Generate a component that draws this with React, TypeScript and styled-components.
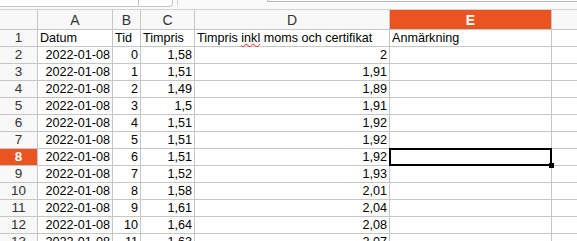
import React from "react";
import styled, { createGlobalStyle } from "styled-components";

const Global = createGlobalStyle`
  html, body { margin: 0; padding: 0; background: #ffffff; }
  body { width: 577px; height: 241px; overflow: hidden; font-family: "Liberation Sans", Arial, sans-serif; }
`;

const Page = styled.div`
  width: 577px;
  height: 241px;
  overflow: hidden;
  display: flex;
  flex-direction: column;
  background: #ffffff;
`;

const FormulaStrip = styled.div`
  height: 9px;
  flex: none;
  display: flex;
  align-items: flex-start;
  background: #fafafa;
`;

const NameBox = styled.div`
  width: 172px;
  height: 6px;
  flex: none;
  display: flex;
  background: #ffffff;
  border: 1px solid #c4c4c4;
  border-top: none;
  border-left: none;
  border-bottom-right-radius: 4px;
`;

const NameBoxInput = styled.div`
  width: 138px;
  border-right: 1px solid #c4c4c4;
`;

const StripGap = styled.div`
  width: 90px;
  flex: none;
  display: flex;
  justify-content: flex-start;
  padding-left: 4px;
  height: 7px;
`;

const StripTick = styled.div`
  width: 1px;
  height: 6px;
  background: #d4d4d4;
`;

const FormulaInput = styled.div`
  flex: 1;
  height: 1px;
  background: #ffffff;
  border: 1px solid #b8b8b8;
  border-top: none;
  border-right: none;
`;

const Sheet = styled.div`
  display: grid;
  grid-template-columns: 37px 74px 27px 53px 194px 161px 1fr;
  grid-auto-rows: 16px;
  grid-template-rows: 19px;
  gap: 1px;
  background: #c6c6c6;
  border-top: 1px solid #d2d2d2;
  flex: 1;
`;

const ColHead = styled.div<{ $active?: boolean }>`
  background: ${(p) => (p.$active ? "#e95420" : "#f8f8f8")};
  color: ${(p) => (p.$active ? "#ffffff" : "#333333")};
  font-weight: ${(p) => (p.$active ? "bold" : "normal")};
  font-size: 14px;
  display: flex;
  align-items: center;
  justify-content: center;
  line-height: 1;
  padding-top: 1px;
`;

const RowHead = styled.div<{ $active?: boolean }>`
  background: ${(p) => (p.$active ? "#e95420" : "#f8f8f8")};
  color: ${(p) => (p.$active ? "#ffffff" : "#333333")};
  font-weight: ${(p) => (p.$active ? "bold" : "normal")};
  font-size: 13.5px;
  display: flex;
  align-items: center;
  justify-content: center;
  line-height: 1;
`;

const Cell = styled.div<{ $num?: boolean }>`
  position: relative;
  background: #ffffff;
  color: #000000;
  font-size: 12.6px;
  line-height: 16px;
  white-space: nowrap;
  overflow: visible;
  padding: 0 2px;
  text-align: ${(p) => (p.$num ? "right" : "left")};
`;

const Squiggle = styled.span`
  text-decoration-line: underline;
  text-decoration-style: wavy;
  text-decoration-color: #ff2020;
  text-decoration-thickness: 1px;
  text-underline-offset: 1px;
`;

const Selection = styled.div`
  position: absolute;
  z-index: 2;
  left: -1px;
  top: -1px;
  right: -1px;
  bottom: -1px;
  border: 2px solid #000000;
  pointer-events: none;
`;

const Handle = styled.div`
  position: absolute;
  right: -4px;
  bottom: -4px;
  width: 5px;
  height: 5px;
  background: #000000;
`;

const rows: [string, string, string, string][] = [
  ["2022-01-08", "0", "1,58", "2"],
  ["2022-01-08", "1", "1,51", "1,91"],
  ["2022-01-08", "2", "1,49", "1,89"],
  ["2022-01-08", "3", "1,5", "1,91"],
  ["2022-01-08", "4", "1,51", "1,92"],
  ["2022-01-08", "5", "1,51", "1,92"],
  ["2022-01-08", "6", "1,51", "1,92"],
  ["2022-01-08", "7", "1,52", "1,93"],
  ["2022-01-08", "8", "1,58", "2,01"],
  ["2022-01-08", "9", "1,61", "2,04"],
  ["2022-01-08", "10", "1,64", "2,08"],
  ["2022-01-08", "11", "1,63", "2,07"],
];

export default function App() {
  return (
    <Page>
      <Global />
      <FormulaStrip>
        <NameBox>
          <NameBoxInput />
        </NameBox>
        <StripGap>
          <StripTick />
        </StripGap>
        <FormulaInput />
      </FormulaStrip>
      <Sheet>
        <ColHead />
        <ColHead>A</ColHead>
        <ColHead>B</ColHead>
        <ColHead>C</ColHead>
        <ColHead>D</ColHead>
        <ColHead $active>E</ColHead>
        <ColHead />

        <RowHead>1</RowHead>
        <Cell>Datum</Cell>
        <Cell>Tid</Cell>
        <Cell>Timpris</Cell>
        <Cell>
          Timpris <Squiggle>inkl</Squiggle> moms och certifikat
        </Cell>
        <Cell>Anmärkning</Cell>
        <Cell />

        {rows.map((r, i) => {
          const n = i + 2;
          const active = n === 8;
          return (
            <React.Fragment key={n}>
              <RowHead $active={active}>{n}</RowHead>
              <Cell $num>{r[0]}</Cell>
              <Cell $num>{r[1]}</Cell>
              <Cell $num>{r[2]}</Cell>
              <Cell $num>{r[3]}</Cell>
              <Cell>
                {active && (
                  <Selection>
                    <Handle />
                  </Selection>
                )}
              </Cell>
              <Cell />
            </React.Fragment>
          );
        })}
      </Sheet>
    </Page>
  );
}
